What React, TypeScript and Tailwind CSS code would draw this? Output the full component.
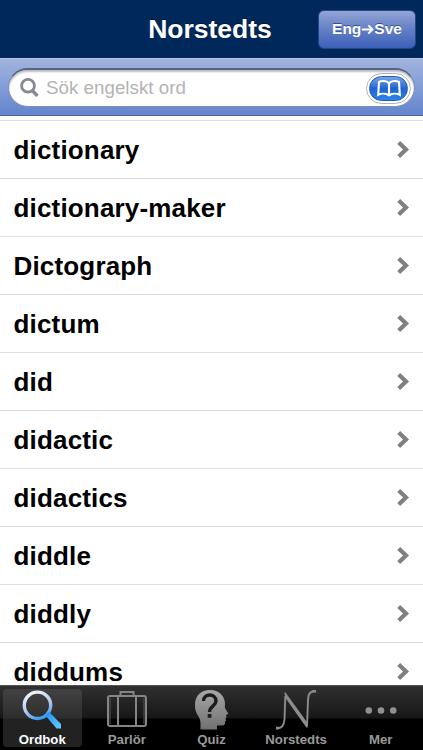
import React, { useState } from 'react';

const words = [
  'dictionary',
  'dictionary-maker',
  'Dictograph',
  'dictum',
  'did',
  'didactic',
  'didactics',
  'diddle',
  'diddly',
  'diddums',
];

const SearchIcon = () => (
  <svg width="20" height="20" viewBox="0 0 20 20" fill="none" stroke="#858993">
    <circle cx="8" cy="7.8" r="6.4" strokeWidth="2.8" />
    <path d="M12.5 12.7l5 5.2" strokeWidth="3.4" />
  </svg>
);

const BookIcon = () => (
  <svg width="26" height="19" viewBox="0 0 26 19" fill="none" stroke="#fff" strokeWidth="2.1">
    <path d="M13 4.200C10.500 1.600 5.500 1.500 3 3L2.200 15.800c3.200-1.500 8-1.500 10.800.5 2.800-2 7.600-2 10.800-.5L23 3C20.500 1.500 15.500 1.600 13 4.200z" />
    <path d="M13 4v12.500" />
  </svg>
);

const Chevron = () => (
  <svg width="13" height="18" viewBox="0 0 13 18" fill="none" stroke="#808080" strokeWidth="4.200">
    <path d="M1.700 1.500l7.300 7-7.300 7" />
  </svg>
);

const MagnifierIcon = () => (
  <svg width="42" height="42" viewBox="0 0 42 42" fill="none">
    <defs>
      <linearGradient id="ring" x1="0.300" y1="0" x2="0.700" y2="1">
        <stop offset="0" stopColor="#eef3fc" />
        <stop offset="0.600" stopColor="#a9c8f0" />
        <stop offset="1" stopColor="#2f9bf0" />
      </linearGradient>
      <linearGradient id="handle" x1="0" y1="0" x2="1" y2="1">
        <stop offset="0" stopColor="#1d8df0" />
        <stop offset="1" stopColor="#63cdfb" />
      </linearGradient>
    </defs>
    <circle cx="16.500" cy="16.300" r="13.200" stroke="url(#ring)" strokeWidth="3.400" />
    <path d="M24.500 26.500l3.500-3.800L40 35v4.500h-4.500z" fill="url(#handle)" />
  </svg>
);

const SuitcaseIcon = () => (
  <svg width="42" height="42" viewBox="0 0 42 42" fill="none" stroke="#858585" strokeWidth="2">
    <rect x="2" y="7" width="38" height="30" rx="2" />
    <path d="M14.500 7V3h13v4M12 7v30M30 7v30" />
    <path d="M4 9v26M38 9v26" strokeWidth="1" stroke="#555" />
  </svg>
);

const HeadIcon = () => (
  <svg width="42" height="42" viewBox="0 0 42 42" fill="none">
    <defs>
      <linearGradient id="head" x1="0" y1="0" x2="0" y2="1">
        <stop offset="0" stopColor="#a8a8a8" />
        <stop offset="1" stopColor="#707070" />
      </linearGradient>
    </defs>
    <path
      fill="url(#head)"
      d="M10.500 40.500c0-6 .5-9-2-13C5.500 23.500 5 20 5 16 5 6.500 11 1 20 1c9 0 15 6 15 14 0 2-.5 3 .3 4.500l2.700 4.700c.5 1-.3 1.300-2 1.600l.5 2.700-1.200 1.300 1 1.500-1.300 1.400c.3 2.500-.5 3.700-3 3.800H27v4z"
    />
    <path d="M13.500 12c0-8 12.500-8 12.500 0 0 5-6.500 5-6.500 11" stroke="#1b1b1b" strokeWidth="3.400" />
    <rect x="17.700" y="25" width="3.700" height="3.700" fill="#1b1b1b" />
  </svg>
);

const SwashIcon = () => (
  <svg width="42" height="42" viewBox="0 0 42 42" fill="none" stroke="#8c8c8c">
    <path d="M1 39.500c5.500.5 8-3 8.500-9L10.300 7" strokeWidth="1.900" />
    <path d="M9.300 3.500h1.200L33 34.500l-.5 4h-1.200L10.500 9z" fill="#8c8c8c" stroke="none" />
    <path d="M32 37l1-26c.3-6.500 2.500-9.300 8-9" strokeWidth="1.900" />
    <path d="M1 39h3.500M37.500 2.300H41" strokeWidth="2.400" />
  </svg>
);

const MoreIcon = () => (
  <svg width="42" height="42" viewBox="0 0 42 42" fill="#909090">
    <circle cx="8.800" cy="21.500" r="3.300" />
    <circle cx="21" cy="21.500" r="3.300" />
    <circle cx="33.200" cy="21.500" r="3.300" />
  </svg>
);

const tabs = [
  { label: 'Ordbok', Icon: MagnifierIcon },
  { label: 'Parlör', Icon: SuitcaseIcon },
  { label: 'Quiz', Icon: HeadIcon },
  { label: 'Norstedts', Icon: SwashIcon },
  { label: 'Mer', Icon: MoreIcon },
];

const App: React.FC = () => {
  const [activeTab, setActiveTab] = useState('Ordbok');

  return (
    <div className="flex h-[750px] w-[423px] flex-col overflow-hidden bg-white font-['Liberation_Sans',Arial,sans-serif]">
      <header className="grid h-[58px] shrink-0 grid-cols-[102px_1fr_105px] items-center bg-[#00285a]">
        <h1 className="col-start-2 text-center text-[26.500px] leading-[58px] font-bold text-white [text-shadow:0_-1px_0_#001533]">
          Norstedts
        </h1>
        <button className="flex h-[39px] w-[98px] items-center justify-center rounded-md border border-[#24468c] bg-linear-to-b from-[#93a4d5] via-[#647fc6] to-[#3c5fb8] pb-px text-[15.500px] font-bold text-white [text-shadow:0_-1px_0_#34508f]">
          Eng
          <svg
            width="13"
            height="11"
            viewBox="0 0 13 11"
            className="mt-px"
            fill="none"
            stroke="#fff"
            strokeWidth="1.900"
          >
            <path d="M.8 5.500H11M7.300 1.300l4.200 4.200-4.200 4.200" />
          </svg>
          Sve
        </button>
      </header>

      {/* Search bar */}
      <div className="h-[58px] shrink-0 border-t border-b border-t-[#b6c5e6] border-b-[#48629f] bg-linear-to-b from-[#a2b4df] to-[#6484cc] px-2 pt-[9px]">
        <div className="flex h-[39px] items-center rounded-full border border-t-2 border-[#7d8fb9] border-t-[#59647d] bg-white pr-[3px] pl-[11px] shadow-[inset_0_2px_2px_#b8bdc6]">
          <SearchIcon />
          <span className="ml-[6px] flex-1 text-[18.800px] leading-none text-[#b3b3b3]">Sök engelskt ord</span>
          <button className="flex h-[31px] w-[45px] items-center justify-center rounded-full border border-[#aeb4c0] bg-white">
            <span className="flex h-[25px] w-[39px] items-center justify-center rounded-full border border-[#2459ae] bg-linear-to-b from-[#76a5e8] from-0% via-[#1f63d0] via-50% to-[#2986ec]">
              <BookIcon />
            </span>
          </button>
        </div>
      </div>
      <div className="h-[5px] shrink-0 border-b border-[#dedede] bg-[#fafafa]" />

      <ul className="min-h-0 flex-1 overflow-hidden">
        {words.map((word) => (
          <li
            key={word}
            className="flex h-[58px] items-center justify-between border-b border-[#dedede] pr-[13px] pl-[13.500px]"
          >
            <span className="text-[26px] leading-none font-bold tracking-[0.170px] text-black">{word}</span>
            <Chevron />
          </li>
        ))}
      </ul>

      {/* Tab bar */}
      <nav className="grid h-[65px] shrink-0 grid-cols-5 border-t border-t-[#555] bg-[linear-gradient(#303030_0px,#171717_32px,#000_33px)] pt-[3px] pb-[3px]">
        {tabs.map(({ label, Icon }) => (
          <button
            key={label}
            onClick={() => setActiveTab(label)}
            className={`mx-[3px] flex flex-col items-center rounded-[4px] ${
              activeTab === label
                ? 'bg-[linear-gradient(#424242_0px,#2e2e2e_29px,#222_30px)] text-white'
                : 'text-[#999]'
            }`}
          >
            <Icon />
            <span className="mt-px text-[13.200px] leading-[15px] font-bold">{label}</span>
          </button>
        ))}
      </nav>
    </div>
  );
};

export default App;
